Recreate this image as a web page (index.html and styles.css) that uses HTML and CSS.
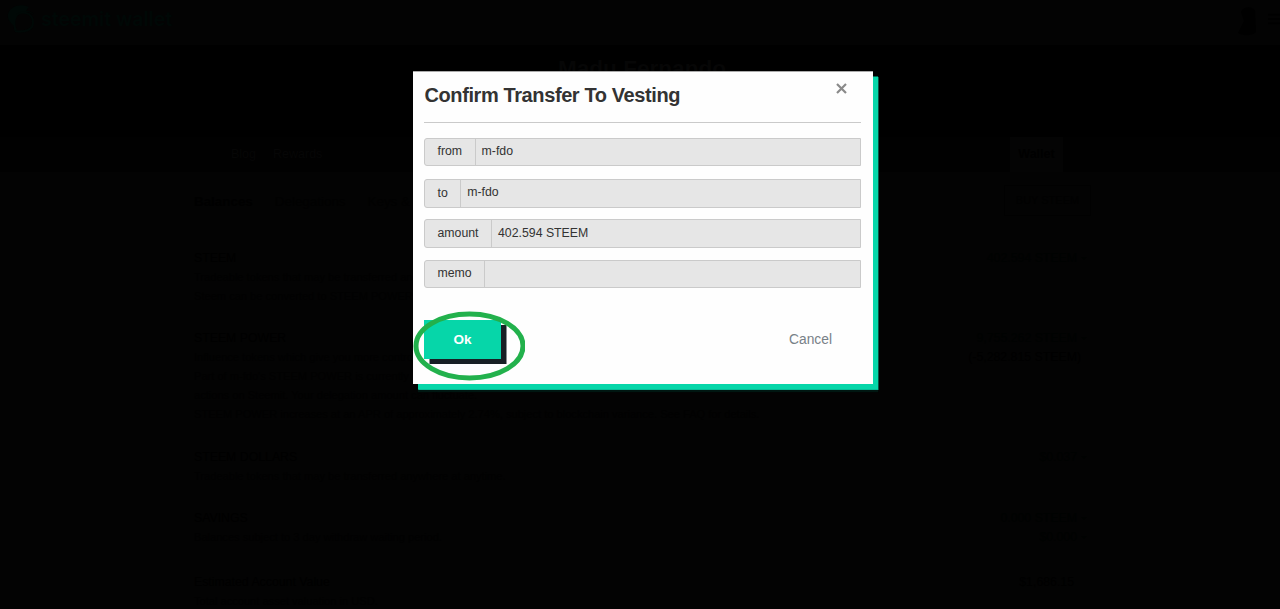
FILE: index.html
```html
<!DOCTYPE html>
<html lang="en">
<head>
<meta charset="utf-8">
<title>Steemit Wallet</title>
<link rel="stylesheet" href="styles.css">
</head>
<body>
<div class="page">
  <header class="topbar">
    <div class="brand">
      <svg class="logo" viewBox="0 0 28 30"><path d="M22 3C14-1 3 2 1 10c-1 6 3 9 5 11 2 3 0 5 2 6l2-1c-3-6-2-15 5-17 5-2 9-1 12 2-1-2-4-4-8-4 1-2 2-3 3-4z"/><path class="logo-ring" d="M10 11c5-5 15-2 16 6s-7 12-18 10"/></svg>
      <span>steemit wallet</span>
    </div>
    <div class="account">
      <svg class="avatar" viewBox="0 0 28 32"><path d="M8 8c2-6 12-6 14-1l1 21c-4 4-13 4-18 1l6-12z"/></svg>
      <svg class="burger" viewBox="0 0 14 14"><path d="M0 2h14M0 7h14M0 12h14"/></svg>
    </div>
  </header>
  <section class="banner"><h1>Madu Fernando</h1></section>
  <nav class="nav">
    <div class="nav-left"><span>Blog</span><span>Rewards</span></div>
    <span class="nav-wallet">Wallet</span>
  </nav>
  <main class="content">
    <div class="subnav">
      <div class="subnav-links"><b>Balances</b><span>Delegations</span><span>Keys &amp;</span></div>
      <span class="buy">BUY STEEM</span>
    </div>
    <section class="row row-steem">
      <div><h2>STEEM</h2><p>Tradeable tokens that may be transferred and</p><p>Steem can be converted to STEEM POWER</p></div>
      <div class="value"><span class="link">402.594 STEEM <i></i></span></div>
    </section>
    <section class="row row-power">
      <div><h2>STEEM POWER</h2><p>Influence tokens which give you more control</p><p>Part of m-fdo's STEEM POWER is currently</p><p>actions on Steemit. Your delegation amount can fluctuate.</p><p>STEEM POWER increases at an APR of approximately 2.74%, subject to blockchain variance. See FAQ for details.</p></div>
      <div class="value"><span class="link">9,755.262 STEEM <i></i></span><span class="delegated">(-5,282.815 STEEM)</span></div>
    </section>
    <section class="row row-dollars">
      <div><h2>STEEM DOLLARS</h2><p>Tradeable tokens that may be transferred anywhere at anytime.</p></div>
      <div class="value"><span class="link">$0.037 <i></i></span></div>
    </section>
    <section class="row row-savings">
      <div><h2>SAVINGS</h2><p>Balances subject to 3 day withdraw waiting period.</p></div>
      <div class="value"><span class="link">0.000 STEEM <i></i></span><span class="link">$0.000 <i></i></span></div>
    </section>
    <section class="row row-estimate">
      <div><h2>Estimated Account Value</h2><p>Total account asset valuation in USD.</p></div>
      <div class="value total">$1,686.15</div>
    </section>
  </main>
</div>

<div class="modal">
  <div class="modal-head"><h3>Confirm Transfer To Vesting</h3><svg class="close" viewBox="0 0 11 11"><path d="M1 1l9 9M10 1l-9 9"/></svg></div>
  <div class="field"><span class="label">from</span><span class="input">m-fdo</span></div>
  <div class="field to"><span class="label">to</span><span class="input">m-fdo</span></div>
  <div class="field amount"><span class="label">amount</span><span class="input">402.594 STEEM</span></div>
  <div class="field memo"><span class="label">memo</span><span class="input"></span></div>
  <div class="actions"><button class="ok">Ok</button><button class="cancel">Cancel</button></div>
  <svg class="marker" viewBox="0 0 112 70"><ellipse cx="56.5" cy="35" rx="53.5" ry="32"/></svg>
</div>
</body>
</html>
```
FILE: styles.css
```css
* { box-sizing: border-box; }
body { margin: 0; background: #030303; font-family: "Liberation Sans", Arial, sans-serif; }
h1, h2, h3, p { margin: 0; }
.page { height: 609px; overflow: hidden; color: #000; font-size: 11.1px; }

.topbar { height: 45px; display: flex; justify-content: space-between; padding: 4px 0 0 7px; }
.brand { display: flex; gap: 6px; color: #000806; font: 600 19.5px/31px Inter, sans-serif; }
.logo { width: 28px; height: 30px; fill: #000806; }
.logo .logo-ring { fill: none; stroke: #000806; stroke-width: 2; }
.account { display: flex; gap: 7px; }
.avatar { width: 28px; height: 32px; }
.burger { width: 12px; height: 14px; margin-top: 8px; stroke: #000; stroke-width: 2; }
.banner { height: 92px; padding: 9px 0 0 4px; background: #000; text-align: center; }
.banner h1 { color: #060606; font-size: 22.6px; line-height: 30px; }
.nav { height: 35px; display: flex; justify-content: space-between; padding: 0 217px 0 231px; background: #010101; color: #060606; font-size: 12.5px; line-height: 35px; }
.nav-left { display: flex; gap: 17px; }
.nav-wallet { width: 53px; background: #040404; color: #000; text-align: center; font-weight: bold; }

.content { padding: 13px 187px 0 194px; }
.subnav { display: flex; justify-content: space-between; height: 64px; font-size: 13.4px; }
.subnav-links { display: flex; gap: 22px; line-height: 33px; white-space: nowrap; }
.subnav-links span { color: #010101; }
.buy { width: 87px; height: 31px; border: 1px solid #010101; color: #010101; line-height: 29px; text-align: center; font-size: 11px; margin-right: 2px; }
.row { display: flex; justify-content: space-between; line-height: 19px; }
.row > div:first-child { white-space: nowrap; }
.row h2 { font-size: 12.3px; line-height: 19px; font-weight: normal; }
.row p { color: #010101; }
.row-steem { height: 80px; }
.row-power { height: 119px; }
.row-dollars { height: 61px; }
.row-savings { height: 64px; }
.value { display: flex; flex-direction: column; align-items: flex-end; padding-right: 6px; font-size: 12.3px; }
.link { color: #000201; display: flex; align-items: center; gap: 4px; }
.link i { border: 3px solid transparent; border-top-color: #000201; border-bottom: 0; }
.delegated { margin-right: 6px; }
.total { padding-right: 19px; }

.modal { position: absolute; left: 413px; top: 71px; width: 460px; height: 313px; padding: 1px 12.5px 0 11px; background: #fefefe; border-top: 1px solid #aaa; box-shadow: 5px 5.5px 0 #06d6a9, 5.5px 6px 0 #06a582, 5px 8px 1px #001611; color: #333; }
.modal-head { height: 50px; display: flex; justify-content: space-between; border-bottom: 1px solid #cacaca; padding-right: 13.5px; }
.modal h3 { font-size: 20px; letter-spacing: -0.4px; line-height: 45px; padding-left: 0.5px; white-space: nowrap; }
.close { width: 11px; height: 11px; margin-top: 10px; stroke: #8a8a8a; stroke-width: 2.2; }
.field { display: flex; height: 28px; margin-top: 15px; background: #e6e6e6; border: 1px solid #cacaca; border-radius: 3px 0 0 3px; font-size: 12.3px; line-height: 25px; }
.field.to { height: 29px; margin-top: 13px; }
.field.to .label { line-height: 27px; }
.field.amount { height: 29px; margin-top: 11px; line-height: 27px; }
.field.memo { margin-top: 12px; }
.label { padding: 0 12.5px; border-right: 1px solid #cacaca; }
.input { padding-left: 6px; }
.actions { display: flex; justify-content: space-between; align-items: flex-start; padding-top: 32px; }
button { border: 0; font-family: inherit; padding: 0; }
.ok { width: 77px; height: 39px; background: #06d6a9; color: #fff; font-size: 13.5px; font-weight: bold; box-shadow: 5.5px 5px 0 #171f24; }
.cancel { height: 38px; background: none; color: #788187; font-size: 13.8px; margin-right: 28.5px; }
.marker { position: absolute; left: 0; top: 239px; width: 112px; height: 70px; fill: none; stroke: #22b14c; stroke-width: 5; }
```
